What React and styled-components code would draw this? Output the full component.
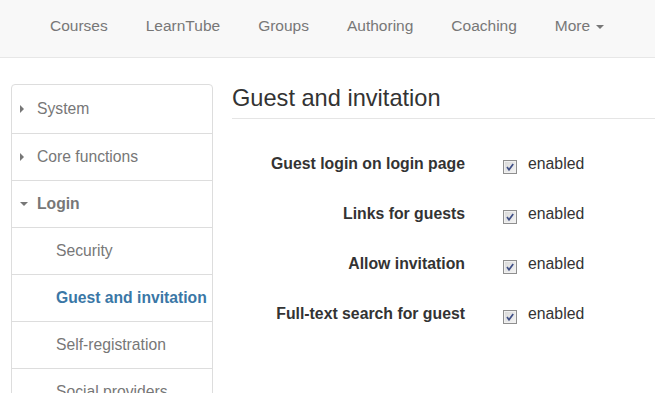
import React from 'react';
import styled, { createGlobalStyle } from 'styled-components';

const GlobalStyle = createGlobalStyle`
  html, body {
    margin: 0;
    padding: 0;
    background: #fff;
    font-family: 'Liberation Sans', Arial, sans-serif;
    font-size: 16px;
    color: #333;
    overflow: hidden;
  }
`;

const NavBar = styled.nav`
  height: 57px;
  background: #f8f8f8;
  border-bottom: 1px solid #e7e7e7;
  display: flex;
  align-items: center;
  padding-left: 31px;
  box-sizing: content-box;
`;

const NavLink = styled.a`
  display: flex;
  align-items: center;
  padding: 0 19px;
  height: 50px;
  color: #777;
  font-size: 15.5px;
  text-decoration: none;
  margin-top: -6px;
`;

const Caret = styled.span`
  display: inline-block;
  width: 0;
  height: 0;
  margin-left: 6px;
  margin-top: 2px;
  border-top: 4px solid #777;
  border-left: 4px solid transparent;
  border-right: 4px solid transparent;
`;

const Page = styled.div`
  display: flex;
  align-items: flex-start;
  gap: 19px;
  padding: 26px 0 0 11px;
`;

const SideMenu = styled.ul`
  list-style: none;
  margin: 0;
  padding: 0;
  width: 200px;
  flex-shrink: 0;
  border: 1px solid #ddd;
  border-radius: 4px;
  background: #fff;
`;

const MenuItem = styled.li`
  display: flex;
  align-items: center;
  height: ${p => (p.$first ? '48px' : '46px')};
  padding-left: ${p => (p.$sub ? '44px' : '7px')};
  border-top: ${p => (p.$first ? 'none' : '1px solid #ddd')};
  color: ${p => (p.$active ? '#3a77a6' : '#777')};
  font-weight: ${p => (p.$bold ? 'bold' : 'normal')};
  font-size: 15.7px;
  white-space: nowrap;
`;

const Arrow = styled.span`
  width: 18px;
  display: inline-flex;
  justify-content: flex-start;
  padding-left: ${p => (p.$open ? '1px' : '1px')};
  box-sizing: border-box;
  &::before {
    content: '';
    width: 0;
    height: 0;
    ${p =>
      p.$open
        ? `border-top: 4px solid #777;
           border-left: 4px solid transparent;
           border-right: 4px solid transparent;`
        : `border-left: 4px solid #777;
           border-top: 4px solid transparent;
           border-bottom: 4px solid transparent;`}
  }
`;

const Content = styled.main`
  flex: 1;
`;

const Heading = styled.h1`
  margin: 0;
  padding-bottom: 5px;
  font-size: 23.6px;
  font-weight: normal;
  line-height: 29px;
  color: #333;
  border-bottom: 1px solid #e5e5e5;
`;

const Form = styled.div`
  display: grid;
  grid-template-columns: 233px auto;
  column-gap: 38px;
  row-gap: 28px;
  padding-top: 34px;
  align-items: center;
`;

const Label = styled.label`
  text-align: right;
  font-weight: bold;
  font-size: 15.8px;
  line-height: 22px;
  color: #333;
`;

const CheckField = styled.div`
  display: flex;
  align-items: center;
  gap: 11px;
  font-size: 15.8px;
  line-height: 22px;
  color: #333;
`;

const Box = styled.span`
  width: 14px;
  height: 14px;
  box-sizing: border-box;
  border: 1px solid #8f8f8f;
  background: linear-gradient(135deg, #d8d8d8 0%, #f4f4f4 100%);
  box-shadow: inset 0 0 0 1px #f0f0f0;
  display: inline-flex;
  align-items: center;
  justify-content: center;
  margin-top: 5px;
`;

const Checkbox = () => (
  <Box>
    <svg width="10" height="10" viewBox="0 0 10 10">
      <path d="M2 5 L4 7.8 L8.2 2" fill="none" stroke="#3f4f86" strokeWidth="1.7" />
    </svg>
  </Box>
);

const navItems = ['Courses', 'LearnTube', 'Groups', 'Authoring', 'Coaching'];

const settings = [
  'Guest login on login page',
  'Links for guests',
  'Allow invitation',
  'Full-text search for guest',
];

export default function App() {
  return (
    <>
      <GlobalStyle />
      <NavBar>
        {navItems.map(item => (
          <NavLink key={item}>{item}</NavLink>
        ))}
        <NavLink>
          More<Caret />
        </NavLink>
      </NavBar>
      <Page>
        <SideMenu>
          <MenuItem $first>
            <Arrow />
            System
          </MenuItem>
          <MenuItem>
            <Arrow />
            Core functions
          </MenuItem>
          <MenuItem $bold>
            <Arrow $open />
            Login
          </MenuItem>
          <MenuItem $sub>Security</MenuItem>
          <MenuItem $sub $bold $active>Guest and invitation</MenuItem>
          <MenuItem $sub>Self-registration</MenuItem>
          <MenuItem $sub>Social providers</MenuItem>
        </SideMenu>
        <Content>
          <Heading>Guest and invitation</Heading>
          <Form>
            {settings.map(s => (
              <React.Fragment key={s}>
                <Label>{s}</Label>
                <CheckField>
                  <Checkbox />
                  enabled
                </CheckField>
              </React.Fragment>
            ))}
          </Form>
        </Content>
      </Page>
    </>
  );
}
